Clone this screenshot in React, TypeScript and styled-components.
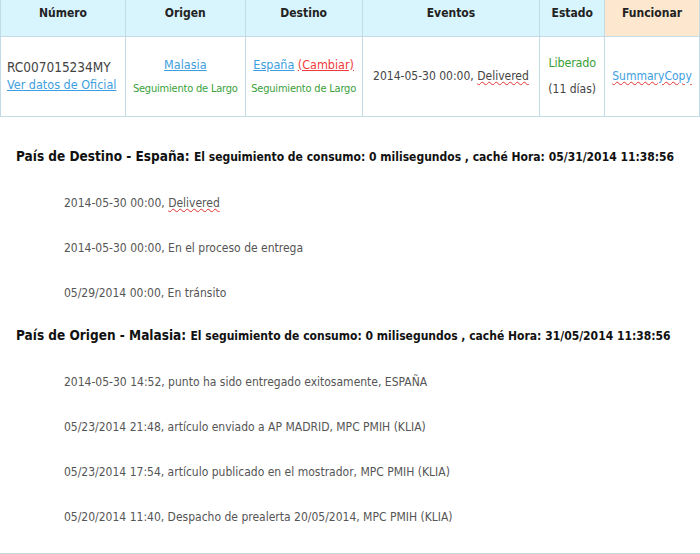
import React from 'react';
import styled, { createGlobalStyle } from 'styled-components';

const Global = createGlobalStyle`
  body { margin: 0; background: #fff; font-family: "DejaVu Sans Condensed", "DejaVu Sans", sans-serif; color: #444; }
`;

const Page = styled.div`
  width: 700px;
  height: 554px;
  box-sizing: border-box;
  border-bottom: 1px solid #c9d6de;
`;

const Table = styled.table`
  width: 700px;
  border-collapse: collapse;
  font-size: 12px;
`;

const Th = styled.th<{ $peach?: boolean; $w: number }>`
  width: ${p => p.$w}px;
  height: 36px;
  padding: 0;
  vertical-align: top;
  padding-top: 6px;
  box-sizing: border-box;
  background: ${p => (p.$peach ? '#fde8cf' : '#d8f4fc')};
  border: 1px solid #c3dbe6;
  border-top: none;
  color: #222;
  font-weight: bold;
`;

const Td = styled.td`
  height: 79px;
  text-align: center;
  border: 1px solid #c3dbe6;
  padding: 0 2px;
  line-height: 17px;
  white-space: nowrap;
`;

const Link = styled.a<{ $red?: boolean }>`
  color: ${p => (p.$red ? '#f03c3c' : '#3d9ee0')};
  text-decoration: underline;
  font-size: 12.5px;
`;

const Spell = styled.span<{ $blue?: boolean }>`
  color: ${p => (p.$blue ? '#3d9ee0' : 'inherit')};
  text-decoration: underline wavy #e03030;
  text-decoration-thickness: 1px;
`;

const Green = styled.div<{ $big?: boolean }>`
  color: #3aa13a;
  font-size: ${p => (p.$big ? 12.5 : 11)}px;
  margin-top: ${p => (p.$big ? 0 : 6)}px;
  letter-spacing: -0.2px;
`;

const Days = styled.div`
  margin-top: 10px;
`;

const Num = styled.div`
  font-size: 13.5px;
  text-align: left;
  color: #444;
  padding-left: 4px;
`;

const Section = styled.div<{ $top: number }>`
  padding: ${p => p.$top}px 0 0 16px;
`;

const Heading = styled.div`
  font-size: 13.5px;
  font-weight: bold;
  color: #111;
  line-height: 16px;
  margin-bottom: 30px;
  white-space: nowrap;
  & span { font-size: 12px; }
`;

const List = styled.div`
  display: flex;
  flex-direction: column;
  gap: 29px;
  padding-left: 48px;
  font-size: 12px;
  line-height: 16px;
  color: #555;
`;

export default function App() {
  return (
    <Page>
      <Global />
      <Table>
        <thead>
          <tr>
            <Th $w={125}>Número</Th>
            <Th $w={120}>Origen</Th>
            <Th $w={117}>Destino</Th>
            <Th $w={178}>Eventos</Th>
            <Th $w={65}>Estado</Th>
            <Th $w={95} $peach>Funcionar</Th>
          </tr>
        </thead>
        <tbody>
          <tr>
            <Td>
              <Num>RC007015234MY</Num>
              <Num><Link>Ver datos de Oficial</Link></Num>
            </Td>
            <Td>
              <Link>Malasia</Link>
              <Green>Seguimiento de Largo</Green>
            </Td>
            <Td>
              <Link>España</Link> <Link $red>(Cambiar)</Link>
              <Green>Seguimiento de Largo</Green>
            </Td>
            <Td>2014-05-30 00:00, <Spell>Delivered</Spell></Td>
            <Td>
              <Green $big>Liberado</Green>
              <Days>(11 días)</Days>
            </Td>
            <Td><Spell $blue>SummaryCopy</Spell></Td>
          </tr>
        </tbody>
      </Table>
      <Section $top={31}>
        <Heading>País de Destino - España: <span>El seguimiento de consumo: 0 milisegundos , caché Hora: 05/31/2014 11:38:56</span></Heading>
        <List>
          <div>2014-05-30 00:00, <Spell>Delivered</Spell></div>
          <div>2014-05-30 00:00, En el proceso de entrega</div>
          <div>05/29/2014 00:00, En tránsito</div>
        </List>
      </Section>
      <Section $top={26}>
        <Heading>País de Origen - Malasia: <span>El seguimiento de consumo: 0 milisegundos , caché Hora: 31/05/2014 11:38:56</span></Heading>
        <List>
          <div>2014-05-30 14:52, punto ha sido entregado exitosamente, ESPAÑA</div>
          <div>05/23/2014 21:48, artículo enviado a AP MADRID, MPC PMIH (KLIA)</div>
          <div>05/23/2014 17:54, artículo publicado en el mostrador, MPC PMIH (KLIA)</div>
          <div>05/20/2014 11:40, Despacho de prealerta 20/05/2014, MPC PMIH (KLIA)</div>
        </List>
      </Section>
    </Page>
  );
}
